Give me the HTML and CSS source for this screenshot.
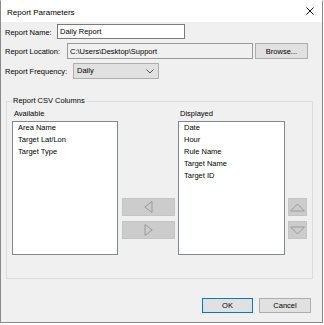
FILE: index.html
```html
<!DOCTYPE html>
<html lang="en">
<head>
    <meta charset="UTF-8">
    <title>Report Parameters</title>
    <link rel="stylesheet" href="styles.css">
</head>
<body>
    <div class="window">
        <div class="titlebar">
            <span class="title">Report Parameters</span>
            <svg class="close" width="8" height="8" viewBox="0 0 8 8">
                <path d="M0.5 0.5 L7.5 7.5 M7.5 0.5 L0.5 7.5" stroke="#111" stroke-width="1"/>
            </svg>
        </div>

        <div class="content">
            <div class="row row-name">
                <label class="lbl lbl-name" for="reportName">Report Name:</label>
                <input class="text name-input" id="reportName" type="text" value="Daily Report">
            </div>
            <div class="row row-loc">
                <label class="lbl lbl-loc" for="reportLoc">Report Location:</label>
                <input class="text loc-input" id="reportLoc" type="text" value="C:\Users\Desktop\Support" readonly>
                <button class="btn browse">Browse...</button>
            </div>
            <div class="row row-freq">
                <label class="lbl lbl-freq">Report Frequency:</label>
                <div class="combo">
                    <span>Daily</span>
                    <svg width="8" height="5" viewBox="0 0 8 5">
                        <path d="M0.5 0.5 L4 4 L7.5 0.5" fill="none" stroke="#555" stroke-width="1"/>
                    </svg>
                </div>
            </div>

            <fieldset class="group">
                <legend>Report CSV Columns</legend>
                <div class="columns">
                    <div class="col col-list">
                        <div class="col-label">Available</div>
                        <div class="listbox">
                            <div>Area Name</div>
                            <div>Target Lat/Lon</div>
                            <div>Target Type</div>
                        </div>
                    </div>
                    <div class="col col-move">
                        <div class="arrow-btn move-btn">
                            <svg width="9" height="12" viewBox="0 0 9 12">
                                <path d="M8 0.5 L0.8 6 L8 11.5 Z" fill="none" stroke="#9a9a9a" stroke-width="1"/>
                            </svg>
                        </div>
                        <div class="arrow-btn move-btn">
                            <svg width="9" height="12" viewBox="0 0 9 12">
                                <path d="M1 0.5 L8.2 6 L1 11.5 Z" fill="none" stroke="#9a9a9a" stroke-width="1"/>
                            </svg>
                        </div>
                    </div>
                    <div class="col col-list col-right">
                        <div class="col-label">Displayed</div>
                        <div class="listbox">
                            <div>Date</div>
                            <div>Hour</div>
                            <div>Rule Name</div>
                            <div>Target Name</div>
                            <div>Target ID</div>
                        </div>
                    </div>
                    <div class="col col-order">
                        <div class="arrow-btn order-btn">
                            <svg width="15" height="9" viewBox="0 0 15 9">
                                <path d="M0.5 8 L7.5 1 L14.5 8 Z" fill="none" stroke="#9a9a9a" stroke-width="1"/>
                            </svg>
                        </div>
                        <div class="arrow-btn order-btn">
                            <svg width="15" height="9" viewBox="0 0 15 9">
                                <path d="M0.5 1 L7.5 8 L14.5 1 Z" fill="none" stroke="#9a9a9a" stroke-width="1"/>
                            </svg>
                        </div>
                    </div>
                </div>
            </fieldset>

            <div class="footer">
                <button class="btn ok">OK</button>
                <button class="btn cancel">Cancel</button>
            </div>
        </div>
    </div>
</body>
</html>
```

FILE: styles.css
```css
body {
    margin: 0;
    background-color: #fff;
    font-family: 'Liberation Sans', Arial, sans-serif;
    font-size: 7.5px;
    color: #000;
}
.window {
    width: 323px;
    height: 323px;
    box-sizing: border-box;
    border: 1px solid #8a8a8a;
    border-top-color: #fff;
    background-color: #f0f0f0;
}
.titlebar {
    height: 21px;
    background-color: #fff;
    display: flex;
    align-items: center;
    justify-content: space-between;
    padding: 0 8px 0 6px;
}
.title {
    font-size: 8px;
    margin-top: 2px;
}
.close {
    margin-top: -1px;
}
.content {
    padding: 2px 0 0 4px;
}
.row {
    display: flex;
    align-items: center;
    height: 16px;
    margin-bottom: 4px;
}
.row-name {
    height: 15px;
}
.lbl {
    display: block;
    padding-top: 1px;
}
.lbl-name { width: 52px; }
.lbl-loc { width: 62px; }
.lbl-freq { width: 68px; }
.text {
    box-sizing: border-box;
    height: 100%;
    border: 1px solid #7a7a7a;
    padding: 0 2px;
    font-family: inherit;
    font-size: 7.5px;
    margin: 0;
    outline: none;
}
.name-input {
    width: 128px;
    background-color: #fff;
}
.loc-input {
    width: 186px;
    background-color: #f0f0f0;
    border-color: #9a9a9a;
}
.btn {
    box-sizing: border-box;
    height: 16px;
    margin: 0;
    padding: 0;
    background-color: #e1e1e1;
    border: 1px solid #adadad;
    font-family: inherit;
    font-size: 7.5px;
    color: #000;
}
.browse {
    width: 53px;
    margin-left: 2px;
}
.combo {
    box-sizing: border-box;
    width: 86px;
    height: 16px;
    background-color: #e1e1e1;
    border: 1px solid #adadad;
    display: flex;
    align-items: center;
    justify-content: space-between;
    padding: 0 4px 0 3px;
}
.combo span {
    margin-top: -2px;
}
.group {
    margin: 17px 0 0 1px;
    width: 307px;
    box-sizing: border-box;
    border: 1px solid #dcdcdc;
    padding: 0 5px 23px 5px;
}
.group legend {
    padding: 0 1px;
    line-height: 10px;
}
.columns {
    display: flex;
    margin-top: 3px;
}
.col-list {
    width: 106px;
}
.col-right {
    width: 107px;
    margin-left: 3px;
}
.col-label {
    line-height: 10px;
    padding-left: 2px;
    margin-bottom: 2px;
}
.listbox {
    box-sizing: border-box;
    height: 134px;
    background-color: #fff;
    border: 1px solid #828790;
    padding: 0 5px;
    line-height: 12px;
}
.col-move,
.col-order {
    display: flex;
    flex-direction: column;
    justify-content: flex-end;
    gap: 5px;
    padding-bottom: 16px;
}
.col-move {
    width: 53px;
    margin-left: 4px;
}
.col-order {
    width: 19px;
    margin-left: 3px;
}
.arrow-btn {
    box-sizing: border-box;
    height: 18px;
    background-color: #cccccc;
    border: 1px solid #c4c4c4;
    display: flex;
    align-items: center;
    justify-content: center;
}
.footer {
    display: flex;
    justify-content: flex-end;
    gap: 6px;
    margin: 19px 11px 0 0;
}
.footer .btn {
    height: 15px;
}
.ok {
    width: 51px;
    border-color: #0078d7;
}
.cancel {
    width: 52px;
}
```
